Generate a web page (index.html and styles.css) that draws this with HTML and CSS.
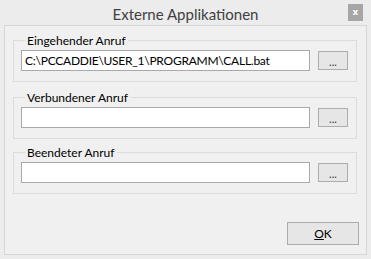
FILE: index.html
```html
<!DOCTYPE html>
<html>
<head>
<meta charset="utf-8">
<link rel="stylesheet" href="styles.css">
</head>
<body>
<div class="window">
  <div class="titlebar">
    <span class="title">Externe Applikationen</span>
    <span class="close">x</span>
  </div>
  <div class="client">
    <fieldset class="group g1">
      <legend>Eingehender Anruf</legend>
      <div class="row">
        <div class="field">C:\PCCADDIE\USER_1\PROGRAMM\CALL.bat</div>
        <div class="btn small">...</div>
      </div>
    </fieldset>
    <fieldset class="group g2">
      <legend>Verbundener Anruf</legend>
      <div class="row">
        <div class="field"></div>
        <div class="btn small">...</div>
      </div>
    </fieldset>
    <fieldset class="group g3">
      <legend>Beendeter Anruf</legend>
      <div class="row">
        <div class="field"></div>
        <div class="btn small">...</div>
      </div>
    </fieldset>
    <div class="footer">
      <div class="btn ok"><u>O</u>K</div>
    </div>
  </div>
</div>
</body>
</html>
```

FILE: styles.css
```css
* { box-sizing: border-box; }
html, body { margin: 0; padding: 0; }
body {
  width: 371px;
  height: 259px;
  overflow: hidden;
  font-family: "Lato", "Noto Sans", sans-serif;
  font-size: 12px;
  color: #000;
}
.window {
  width: 371px;
  height: 259px;
  background: #ececec;
  display: flex;
  flex-direction: column;
}
.titlebar {
  height: 27px;
  position: relative;
  display: flex;
  align-items: center;
  justify-content: center;
  padding-top: 2px;
}
.title {
  font-size: 15px;
  color: #404040;
  line-height: 18px;
}
.close {
  position: absolute;
  right: 8px;
  top: 4px;
  width: 15px;
  height: 17px;
  background: #a6a6a6;
  color: #fff;
  font-family: "DejaVu Sans", sans-serif;
  font-size: 9px;
  font-weight: bold;
  line-height: 16px;
  text-align: center;
}
.client {
  margin: 0 4px 4px 4px;
  flex: 1;
  border: 1px solid #d6d6d6;
  background: #f0f0f0;
  padding: 7px 9px 9px 8px;
  display: flex;
  flex-direction: column;
}
.group {
  margin: 0;
  border: 1px solid #dcdcdc;
  padding: 2px 8px 10px 7px;
  min-width: 0;
}
.group legend {
  padding: 0 2px;
  margin-left: 4px;
  font-size: 12px;
  line-height: 15px;
  color: #000;
}
.g2 { margin-top: 8px; }
.g3 { margin-top: 6px; }
.row {
  display: flex;
  align-items: center;
  gap: 8px;
}
.field {
  flex: 1;
  height: 21px;
  background: #fff;
  border: 1px solid #a9a9a9;
  padding: 0 3px;
  line-height: 19px;
  letter-spacing: -0.25px;
  white-space: nowrap;
  overflow: hidden;
}
.btn {
  background: #e6e6e6;
  border: 1px solid #acacac;
  text-align: center;
  color: #000;
}
.small {
  width: 30px;
  height: 19px;
  line-height: 19px;
  font-size: 11px;
  color: #333;
}
.footer {
  display: flex;
  justify-content: flex-end;
  margin-top: 28px;
  margin-right: -2px;
}
.ok {
  width: 72px;
  height: 23px;
  line-height: 21px;
}
.ok u { text-decoration: underline; }
```
